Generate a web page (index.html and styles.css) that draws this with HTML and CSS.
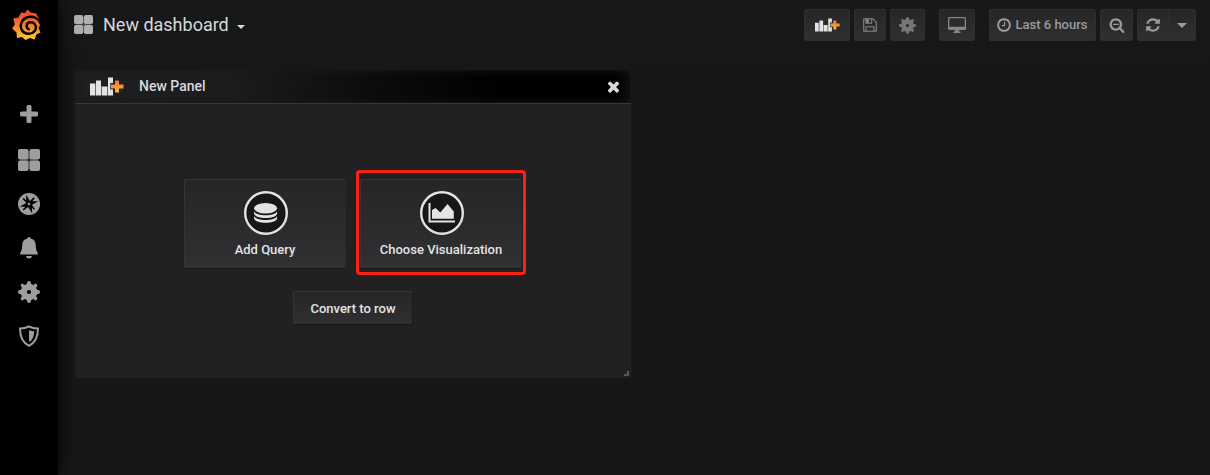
FILE: index.html
```html
<!DOCTYPE html>
<html lang="en">
<head>
<meta charset="utf-8">
<title>New dashboard</title>
<link rel="stylesheet" href="styles.css">
</head>
<body>
<svg class="defs" width="0" height="0" aria-hidden="true">
  <defs>
    <linearGradient id="flame" x1="0" y1="0" x2="0" y2="1"><stop offset="0" stop-color="#f04e2b"/><stop offset=".3" stop-color="#f15b2b"/><stop offset=".65" stop-color="#f7942c"/><stop offset="1" stop-color="#fcd02c"/></linearGradient>
    <linearGradient id="plusfill" x1="0" y1="0" x2="0" y2="1"><stop offset="0" stop-color="#f0743c"/><stop offset="1" stop-color="#fbb731"/></linearGradient>
  </defs>
  <symbol id="grid" viewBox="0 0 22 22">
    <path d="M2 10h18v2H2zM10 2h2v18h-2z" opacity=".35"/>
    <rect x="0" y="0" width="10.500" height="10.500" rx="2"/><rect x="11.500" y="0" width="10.500" height="10.500" rx="2"/><rect x="0" y="11.500" width="10.500" height="10.500" rx="2"/><rect x="11.500" y="11.500" width="10.500" height="10.500" rx="2"/>
  </symbol>
  <symbol id="gear" viewBox="0 0 22 22">
    <path fill-rule="evenodd" d="M8.800 3 9.500.5Q11-.4 12.500.5L13.200 3 15.300 3.900 17.500 2.500Q19.200 2.800 19.500 4.500L18.100 6.700 19 8.800 21.500 9.500Q22.400 11 21.500 12.500L19 13.200 18.100 15.300 19.500 17.500Q19.200 19.200 17.500 19.500L15.300 18.100 13.200 19 12.500 21.500Q11 22.400 9.500 21.500L8.800 19 6.700 18.100 4.500 19.500Q2.800 19.200 2.500 17.500L3.900 15.300 3 13.200.5 12.500Q-.4 11 .5 9.500L3 8.800 3.900 6.700 2.500 4.500Q2.800 2.800 4.500 2.500L6.700 3.900ZM11 8.900a2.100 2.100 0 1 0 0 4.200a2.100 2.100 0 1 0 0-4.200Z"/>
  </symbol>
  <symbol id="addpanel" viewBox="0 0 34 19">
    <path d="M0 6.500h5V18.500H0ZM6 3.500h5v15H6ZM12 9.500h5v9h-5ZM18 .5h5v5.500h-2.700v6.500h2.700v6h-5Z"/>
    <path opacity=".4" d="M5 6.500h1v12H5ZM11 9.500h1v9h-1ZM17 9.500h1v9h-1Z"/>
    <path fill="url(#plusfill)" d="M25 3.500h4V7.500H33.500v4H29V15.500h-4v-4H21V7.500h4Z"/>
  </symbol>
</svg>

<div class="app">
  <nav class="sidebar">
    <svg class="logo" viewBox="0 0 30 32">
      <path fill="url(#flame)" d="M15.400.500 19 3.700 24 4.200 26 8 28.300 12.500 28 16 26.500 19 28.500 23.500 24.500 25.500 22.500 30.500 18 29 13.500 31 10 28 5 29 4.500 23.500.2 19.500 2.800 15.500 1.200 9.500 6.500 8.500 9 3.600 13 4Z"/>
      <path fill="none" stroke="#000" stroke-width="2.500" stroke-linecap="round" d="M29 15C27 9.500 21.500 6.800 16.300 8C9.500 9.800 7.300 16.500 9.800 21C12.800 26 20.500 26 23.300 21C25.500 16 21.300 12.500 17.700 13.300C14 14.300 13.500 18.800 16.800 20.300"/>
    </svg>
    <div class="menu">
      <svg class="mi plus" viewBox="0 0 18 18"><path d="M6.500 1.500Q6.500 0 8 0h2q1.500 0 1.500 1.500v5h5Q18 6.500 18 8v2q0 1.500-1.500 1.500h-5v5Q11.500 18 10 18H8q-1.500 0-1.500-1.500v-5h-5Q0 11.500 0 10V8Q0 6.500 1.500 6.500h5Z"/></svg>
      <svg class="mi"><use href="#grid"/></svg>
      <svg class="mi" viewBox="0 0 22 22"><circle cx="11" cy="11" r="11"/><path fill="#000" d="M8.200 1.800 12 8.200 20.200 8.200 13.800 12 14.200 20.500 10 13.800 1.800 13.800 8.200 10ZM15.800 4.300 16.800 5.300 13.800 9 12 7.700ZM17 16 15.700 16.800 12.800 13.200 14 12ZM5.500 17.500 4.800 16.300 8.500 12.800 10 14ZM4.500 6 5.600 5 9.300 8.300 8 9.500Z"/><circle cx="11" cy="11" r="1.300"/></svg>
      <svg class="mi" viewBox="0 0 22 22"><path d="M11 0q1.600 0 1.700 1.500C16.500 2.300 17.600 5 17.800 8.500c.2 3.800.6 5.500 2 7.300V17.500H2.200V15.800C3.600 14 4 12.300 4.200 8.500 4.400 5 5.500 2.300 9.300 1.500 9.400 0 11 0 11 0ZM8 19h6q-.5 2.600-3 2.600T8 19Z"/></svg>
      <svg class="mi"><use href="#gear"/></svg>
      <svg class="mi" viewBox="0 0 22 22"><path fill="none" stroke="#9e9e9e" stroke-width="2" d="M11 1.500Q15 3.500 20 3.500C20 12 17.500 17.500 11 20.800 4.500 17.500 2 12 2 3.500Q7 3.500 11 1.500Z"/><path d="M11 5.200Q13.500 6 16.200 6.200C16 11.500 14.500 15 11 17Z"/></svg>
    </div>
  </nav>

  <main class="main">
    <header class="navbar">
      <a class="title"><svg class="title-icon"><use href="#grid"/></svg><span>New dashboard</span><i class="caret"></i></a>
      <div class="toolbar">
        <button class="tool add"><svg width="25" height="14"><use href="#addpanel"/></svg></button>
        <button class="tool save"><svg width="16" height="16" viewBox="0 0 1792 1792"><path d="M512 1536h768v-384h-768v384zm896 0h128v-896q0-14-10-38.500t-20-34.500l-281-281q-10-10-34-20t-39-10v416q0 40-28 68t-68 28h-576q-40 0-68-28t-28-68v-416h-128v1280h128v-416q0-40 28-68t68-28h832q40 0 68 28t28 68v416zm-384-928v-320q0-13-9.500-22.500t-22.500-9.500h-192q-13 0-22.500 9.500t-9.500 22.500v320q0 13 9.500 22.500t22.500 9.500h192q13 0 22.500-9.500t9.500-22.500zm640 32v928q0 40-28 68t-68 28h-1344q-40 0-68-28t-28-68v-1344q0-40 28-68t68-28h928q40 0 88 20t76 48l280 280q28 28 48 76t20 88z"/></svg></button>
        <button class="tool settings"><svg width="17" height="17"><use href="#gear"/></svg></button>
        <button class="tool screen"><svg width="18" height="16" viewBox="0 0 18 16"><path fill-rule="evenodd" d="M1.500 0h15Q18 0 18 1.500v10q0 1.500-1.500 1.500H11v1.200l1.500.5V16h-7v-1.300L7 14.200V13H1.500Q0 13 0 11.500v-10Q0 0 1.500 0ZM1.300 1.200v8.500h15.400V1.200Z"/></svg></button>
        <button class="tool time"><svg width="16" height="16" viewBox="0 0 1792 1792"><path d="M1024 544v448q0 14-9 23t-23 9h-320q-14 0-23-9t-9-23v-64q0-14 9-23t23-9h224v-352q0-14 9-23t23-9h64q14 0 23 9t9 23zm416 352q0-148-73-273t-198-198-273-73-273 73-198 198-73 273 73 273 198 198 273 73 273-73 198-198 73-273zm224 0q0 209-103 385.500t-279.500 279.500-385.500 103-385.500-103-279.500-279.500-103-385.500 103-385.500 279.500-279.500 385.500-103 385.500 103 279.500 279.500 103 385.500z"/></svg><span>Last 6 hours</span></button>
        <button class="tool zoom"><svg width="16" height="16" viewBox="0 0 1792 1792"><path d="M1088 800v64q0 13-9.500 22.500t-22.500 9.500h-576q-13 0-22.500-9.500t-9.500-22.500v-64q0-13 9.500-22.500t22.500-9.500h576q13 0 22.500 9.500t9.500 22.500zm128 32q0-185-131.500-316.500t-316.500-131.500-316.500 131.500-131.500 316.500 131.500 316.500 316.500 131.500 316.500-131.500 131.500-316.500zm512 832q0 53-37.500 90.500t-90.500 37.500q-54 0-90-38l-343-342q-179 124-399 124-143 0-273.500-55.500t-225-150-150-225-55.500-273.500 55.500-273.500 150-225 225-150 273.500-55.500 273.500 55.500 225 150 150 225 55.500 273.500q0 220-124 399l343 343q37 37 37 90z"/></svg></button>
        <div class="refresh-group">
          <button class="tool refresh"><svg width="16" height="16" viewBox="0 0 1792 1792"><path d="M1639 1056q0 5-1 7-64 268-268 434.500t-478 166.500q-146 0-282.500-55t-243.500-157l-129 129q-19 19-45 19t-45-19-19-45v-448q0-26 19-45t45-19h448q26 0 45 19t19 45-19 45l-137 137q71 66 161 102t187 36q134 0 250-65t186-179q11-17 53-117 8-23 30-23h192q13 0 22.500 9.500t9.500 22.500zm25-800v448q0 26-19 45t-45 19h-448q-26 0-45-19t-19-45 19-45l138-138q-148-137-349-137-134 0-250 65t-186 179q-11 17-53 117-8 23-30 23h-199q-13 0-22.500-9.500t-9.500-22.500v-7q65-268 270-434.500t480-166.500q146 0 284 55.500t245 156.500l130-129q19-19 45-19t45 19 19 45z"/></svg></button>
          <button class="tool interval"><i class="caret"></i></button>
        </div>
      </div>
    </header>

    <section class="panel">
      <header class="panel-header">
        <svg width="34" height="19"><use href="#addpanel"/></svg>
        <span>New Panel</span>
        <svg class="close" width="17" height="17" viewBox="0 0 1792 1792"><path d="M1490 1322q0 40-28 68l-136 136q-28 28-68 28t-68-28l-294-294-294 294q-28 28-68 28t-68-28l-136-136q-28-28-28-68t28-68l294-294-294-294q-28-28-28-68t28-68l136-136q28-28 68-28t68 28l294 294 294-294q28-28 68-28t68 28l136 136q28 28 28 68t-28 68l-294 294 294 294q28 28 28 68z"/></svg>
      </header>
      <div class="panel-body">
        <div class="choices">
          <button class="choice">
            <svg width="44" height="44" viewBox="0 0 44 44"><circle cx="22" cy="22" r="20.800" fill="#161719" stroke="#e3e3e3" stroke-width="2.400"/><ellipse cx="21.600" cy="17.200" rx="11.500" ry="5.300"/><path d="M10.100 20.200C12 25.600 31.200 25.600 33.100 20.200V22.700C31.200 28.500 12 28.500 10.100 22.700ZM10.100 25C12 30.400 31.200 30.400 33.100 25V27.500C31.200 33.300 12 33.300 10.100 27.500Z"/></svg>
            <span>Add Query</span>
          </button>
          <div class="highlight">
            <button class="choice">
              <svg width="44" height="44" viewBox="0 0 44 44"><circle cx="22" cy="22" r="20.800" fill="#161719" stroke="#e3e3e3" stroke-width="2.400"/><path d="M8.500 12h2v17.500H35v2H8.500ZM12 27.800V19L15.500 17 20.300 21.500 27.500 13 33.800 20.500V27.800Z"/></svg>
              <span>Choose Visualization</span>
            </button>
          </div>
        </div>
        <button class="convert">Convert to row</button>
      </div>
      <i class="resize"></i>
    </section>
  </main>
</div>
</body>
</html>
```
FILE: styles.css
```css
* { box-sizing: border-box; }
body { margin: 0; background: #161719; color: #d8d9da; font-family: Roboto, "Liberation Sans", sans-serif; font-size: 13px; overflow: hidden; }
svg { display: block; flex: none; fill: currentColor; }
.defs { position: absolute; }
button { font: inherit; color: inherit; margin: 0; padding: 0; }
.app { display: flex; height: 475px; }

.sidebar { position: relative; z-index: 1; width: 58px; background: #000; flex: none; color: #9e9e9e; box-shadow: 0 0 20px #000; }
.logo { width: 30px; height: 32px; margin: 9px 0 0 12px; }
.menu { display: flex; flex-direction: column; align-items: center; gap: 22px; padding-top: 64px; }
.mi { width: 22px; height: 22px; }
.mi.plus { width: 18px; height: 18px; margin-bottom: 4px; }

.main { flex: 1; padding: 0 14px 0 17px; background: linear-gradient(#17181a, #161719 60px); }
.navbar { height: 70px; display: flex; justify-content: space-between; align-items: flex-start; }
.title { display: flex; align-items: center; height: 30px; margin-top: 9px; font-size: 18px; }
.title-icon { width: 19px; height: 19px; margin: 1px 10px 0 -1px; color: #b0b0b0; }
.caret { width: 0; height: 0; border: 4px solid transparent; border-top-color: currentColor; border-bottom: 0; }
.title .caret { margin: 6px 0 0 8px; }

.toolbar { display: flex; margin-top: 9px; gap: 4px; }
.tool { display: flex; align-items: center; justify-content: center; height: 32px; border: 1px solid #2f2f32; border-radius: 2px; background: linear-gradient(#262628, #303033); color: #9b9b9b; font-weight: 500; }
.add { width: 46px; color: #e3e3e3; }
.save { width: 32px; color: #858585; }
.settings { width: 35px; color: #767676; }
.screen { width: 36px; margin: 0 10px; color: #858585; }
.time { width: 107px; gap: 3px; padding-right: 1px; }
.time span { margin-top: -2px; }
.zoom { width: 33px; }
.refresh-group { display: flex; width: 59px; }
.refresh { width: 32px; border-radius: 2px 0 0 2px; }
.interval { width: 27px; border-left: 0; border-radius: 0 2px 2px 0; }
.interval .caret { border-width: 5px 5px 0; }

.panel { position: relative; width: 556px; height: 308px; background: #212124; border-radius: 2px; overflow: hidden; }
.panel-header { display: flex; align-items: center; height: 34px; padding: 0 9px 0 15px; font-size: 14px; font-weight: 500; color: #d8d9da; border-bottom: 1px solid #37373a; background: linear-gradient(90deg, #1e1f21 0, #1b1c1e 28%, #0b0b0c 55%, #000 78%, #000 97%, #0b0b0c 100%); box-shadow: inset 0 0 8px #1b1b1c; }
.panel-header > svg:first-child { color: #e3e3e3; }
.panel-header span { margin: -2px 0 0 15px; }
.panel-header .close { margin-left: auto; }
.panel-body { display: flex; flex-direction: column; align-items: center; }
.choices { display: flex; padding: 66px 0 0 4px; gap: 10px; }
.choice { display: flex; flex-direction: column; align-items: center; width: 162px; height: 90px; padding-top: 11px; border: 1px solid #343437; border-right-color: #29292b; border-bottom-color: #171719; border-radius: 2px; background: linear-gradient(#262628, #303033); font-weight: 500; color: #e3e3e3; }
.choices > .choice { margin-top: 9px; }
.choice svg { margin-left: 2px; }
.choice span { margin-top: 7px; line-height: 15px; }
.highlight { width: 170px; height: 105px; padding: 6px 1px; border: 3px solid #fc2117; border-radius: 4px; }
.convert { width: 120px; height: 34px; margin-top: 16px; border: 1px solid #343437; border-right-color: #1b1b1d; border-bottom-color: #171719; border-radius: 2px; background: linear-gradient(#262628, #303033); font-weight: 500; color: #e3e3e3; }
.resize { position: absolute; right: 2px; bottom: 2px; width: 5px; height: 5px; border: solid #58585a; border-width: 0 2px 2px 0; }
```
